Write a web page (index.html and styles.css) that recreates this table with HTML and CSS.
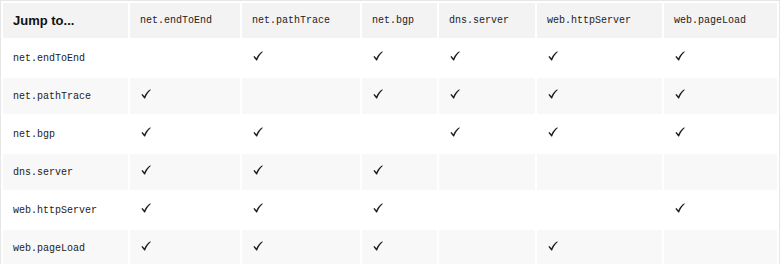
FILE: index.html
```html
<!DOCTYPE html>
<html lang="en">
<head>
  <meta charset="UTF-8">
  <meta name="viewport" content="width=device-width, initial-scale=1.0">
  <title>Jump to...</title>
  <link rel="stylesheet" href="styles.css">
</head>
<body>
  <div class="matrix">
    <table>
      <colgroup>
        <col class="c1"><col class="c2"><col class="c3"><col class="c4"><col class="c5"><col class="c6"><col class="c7">
      </colgroup>
      <thead>
        <tr>
          <th class="jump">Jump to...</th>
          <th>net.endToEnd</th>
          <th>net.pathTrace</th>
          <th>net.bgp</th>
          <th>dns.server</th>
          <th>web.httpServer</th>
          <th>web.pageLoad</th>
        </tr>
      </thead>
      <tbody id="matrixBody"></tbody>
    </table>
  </div>

  <script>
    const names = ['net.endToEnd', 'net.pathTrace', 'net.bgp', 'dns.server', 'web.httpServer', 'web.pageLoad'];
    const links = [
      [0, 1, 1, 1, 1, 1],
      [1, 0, 1, 1, 1, 1],
      [1, 1, 0, 1, 1, 1],
      [1, 1, 1, 0, 0, 0],
      [1, 1, 1, 0, 0, 1],
      [1, 1, 1, 0, 1, 0]
    ];
    const check = '<svg class="check" viewBox="0 0 10 10" width="10" height="10"><path d="M0.4 5.7 L1.5 5 L3.4 7.3 C4.8 4.3 6.7 1.8 9.4 0.3 L9.7 0.9 C7.3 2.9 5.4 5.9 4.1 9.6 L3.3 9.6 Z"/></svg>';

    const tbody = document.getElementById('matrixBody');
    names.forEach((name, i) => {
      const row = document.createElement('tr');
      row.innerHTML = `<td class="name">${name}</td>` +
        links[i].map(on => `<td>${on ? check : ''}</td>`).join('');
      tbody.appendChild(row);
    });
  </script>
</body>
</html>
```

FILE: styles.css
```css
body {
  margin: 0;
  background: #fff;
  font-family: "Liberation Mono", monospace;
  color: #222;
}

.matrix {
  border: 1px solid #e6e6e6;
}

table {
  width: 100%;
  table-layout: fixed;
  border-spacing: 2px;
}

.c1 { width: 125px; }
.c2 { width: 110px; }
.c3 { width: 118px; }
.c4 { width: 75px; }
.c5 { width: 96px; }
.c6 { width: 125px; }
.c7 { width: 113px; }

th, td {
  padding: 0 10px;
  text-align: left;
  vertical-align: middle;
  white-space: nowrap;
}

th {
  height: 35px;
  background: #f3f3f3;
  font-weight: normal;
  font-size: 10px;
}

th.jump {
  font-family: "Liberation Sans", Arial, sans-serif;
  font-weight: bold;
  font-size: 13px;
  color: #111;
}

td {
  height: 36px;
  font-size: 10px;
}

tbody tr:nth-child(even) td {
  background: #f8f8f8;
}

.check {
  display: block;
  margin: -4px 0 0 1px;
  fill: #1c1c24;
}
```
